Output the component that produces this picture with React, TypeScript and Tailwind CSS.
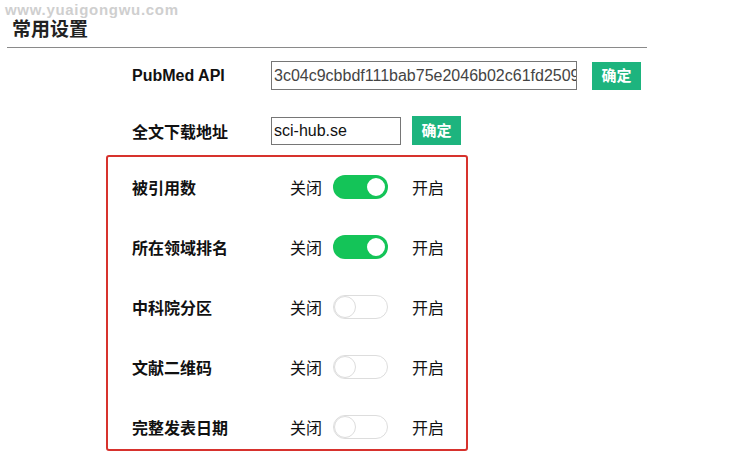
import React from "react";

const cjk = { fontFamily: '"Noto Sans CJK SC", "Liberation Sans", sans-serif' };
const latin = { fontFamily: '"Liberation Sans", "Noto Sans CJK SC", sans-serif' };

function Toggle({ on }: { on: boolean }) {
  return on ? (
    <div className="flex h-[24px] w-[55px] items-center justify-end rounded-full bg-[#14c458] pr-[1px]">
      <div className="h-[22px] w-[22px] rounded-full border-2 border-[#14c458] bg-white" />
    </div>
  ) : (
    <div className="flex h-[24px] w-[55px] items-center justify-start rounded-full border border-[#dddddd] bg-white">
      <div className="h-[22px] w-[22px] rounded-full border border-[#dddddd] bg-white" />
    </div>
  );
}

const rows: [string, boolean][] = [
  ["被引用数", true],
  ["所在领域排名", true],
  ["中科院分区", false],
  ["文献二维码", false],
  ["完整发表日期", false],
];

export default function App() {
  return (
    <div className="relative h-[466px] w-[740px] overflow-hidden bg-white text-[#111]" style={cjk}>
      <div
        className="absolute left-[5px] top-[3px] text-[15px] font-bold leading-[14px] tracking-[0.7px] text-[#cfcfcf]"
        style={latin}
      >
        www.yuaigongwu.com
      </div>
      <div className="pl-[12px] pt-[17px] text-[19px] font-bold leading-[22px] text-[#222]">常用设置</div>
      <div className="ml-[7px] mt-[8px] w-[640px] border-t border-[#8a8a8a]" />

      <div className="ml-[132px] mt-[13px] flex items-center">
        <div className="w-[139px] text-[16px] font-bold" style={latin}>
          PubMed API
        </div>
        <div
          className="flex h-[29px] w-[306px] items-center overflow-hidden whitespace-nowrap border border-[#767676] px-[2px] text-[16px] text-[#444]"
          style={latin}
        >
          3c04c9cbbdf111bab75e2046b02c61fd2509
        </div>
        <div className="ml-[15px] flex h-[28px] w-[49px] items-center justify-center bg-[#1db47e] text-[15px] font-bold text-white">
          确定
        </div>
      </div>

      <div className="ml-[132px] mt-[26px] flex items-center">
        <div className="w-[139px] text-[16px] font-bold">全文下载地址</div>
        <div
          className="flex h-[28px] w-[130px] items-center border border-[#767676] px-[2px] text-[16px] text-[#111]"
          style={latin}
        >
          sci-hub.se
        </div>
        <div className="ml-[11px] flex h-[29px] w-[49px] items-center justify-center bg-[#1db47e] text-[15px] font-bold text-white">
          确定
        </div>
      </div>

      <div className="ml-[106px] mt-[10px] flex h-[296px] w-[362px] flex-col gap-[36px] rounded-[3px] border-2 border-[#d7322d] pl-[24px] pt-[18px]">
        {rows.map(([label, on]) => (
          <div key={label} className="flex h-[24px] items-center text-[16px]">
            <div className="w-[158px] font-bold">{label}</div>
            <div className="w-[43px]">关闭</div>
            <Toggle on={on} />
            <div className="ml-[24px]">开启</div>
          </div>
        ))}
      </div>
    </div>
  );
}
